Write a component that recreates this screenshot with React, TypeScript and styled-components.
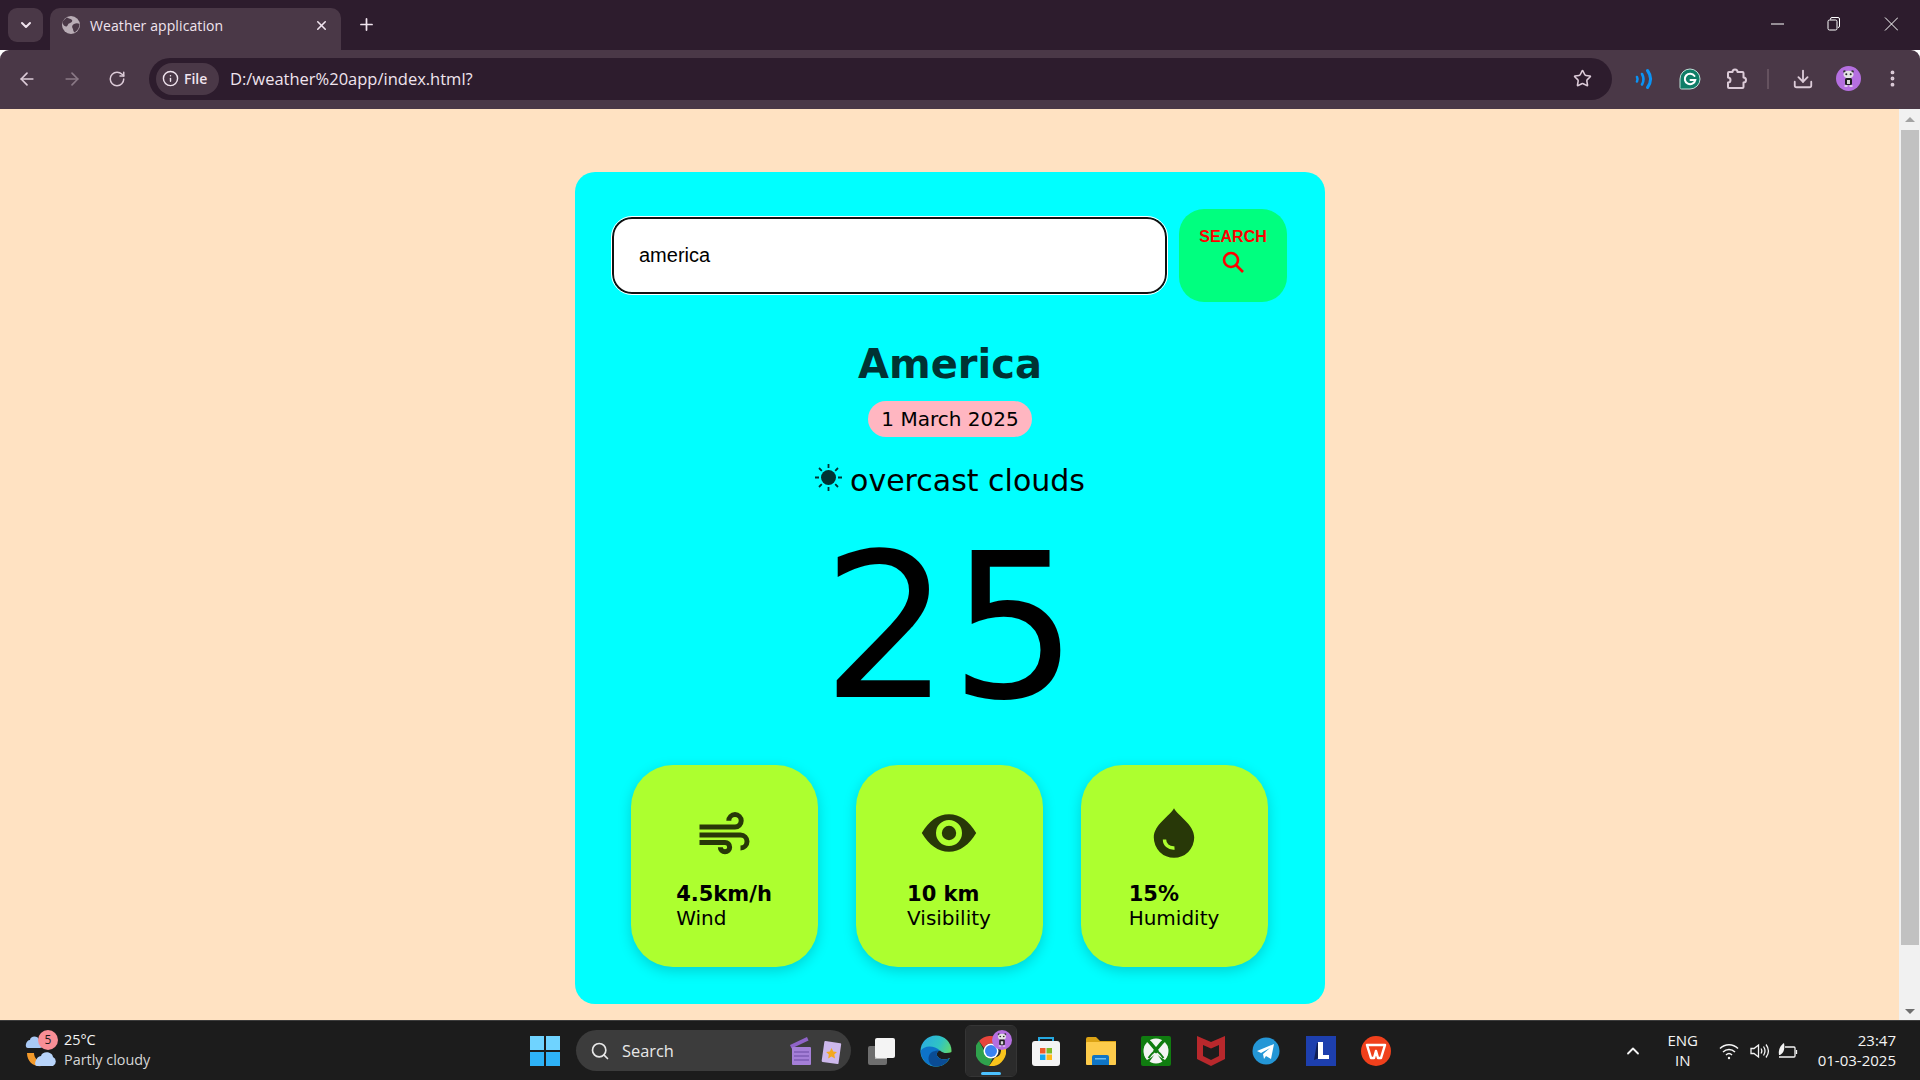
import React from "react";
import styled, { createGlobalStyle } from "styled-components";
import { ArrowLeft, ArrowRight, ChevronDown, ChevronUp, Download, Info, MoreVertical, Plus, RotateCw, Search as SearchGlyph, Star, X } from "lucide-react";

const GlobalStyle = createGlobalStyle`
  html, body { margin: 0; padding: 0; height: 100%; overflow: hidden; }
  * { box-sizing: border-box; }
`;

const uiFont = `"Open Sans", "Noto Sans", sans-serif`;
const pageFont = `"DejaVu Sans", Verdana, sans-serif`;

const Screen = styled.div`
  display: flex;
  flex-direction: column;
  width: 1920px;
  height: 1080px;
  overflow: hidden;
  font-family: ${uiFont};
`;

/* browser chrome */
const TabStrip = styled.div`
  display: flex;
  align-items: flex-end;
  height: 50px;
  padding-left: 8px;
  background: #2d1c2d;
  color: #f0e4ee;
`;

const TabSearch = styled.button`
  display: flex;
  align-items: center;
  justify-content: center;
  width: 35px;
  height: 34px;
  margin: 0 7px 8px 0;
  padding: 0;
  border: 0;
  border-radius: 9px;
  background: #4a3847;
  color: #f0e4ee;
`;

const Tab = styled.div`
  display: flex;
  align-items: center;
  width: 291px;
  height: 42px;
  padding: 0 12px 8px 11px;
  border-radius: 10px 10px 0 0;
  background: #4a3847;
  font-size: 14px;
`;

const TabTitle = styled.span`
  flex: 1;
  margin-left: 9px;
  letter-spacing: 0.1px;
`;

const NewTab = styled.div`
  display: flex;
  width: 32px;
  margin: 0 auto 16px 9px;
  justify-content: center;
`;

const WindowControls = styled.div`
  display: flex;
  align-self: stretch;
  padding-top: 16px;
  padding-right: 21px;
  gap: 41px;
`;

const WindowButton = styled.div`
  display: flex;
  justify-content: center;
  width: 16px;
  height: 16px;
`;

const Toolbar = styled.div`
  display: flex;
  align-items: center;
  height: 59px;
  padding: 0 7px 2px 17px;
  border-radius: 9px 9px 0 0;
  background: #4a3847;
  color: #dccbd8;
`;

const NavButton = styled.div<{ $dim?: boolean }>`
  display: flex;
  justify-content: center;
  width: 20px;
  margin-right: 25px;
  color: ${(p) => (p.$dim ? "#8a7986" : "#dccbd8")};
`;

const Omnibox = styled.div`
  display: flex;
  align-items: center;
  flex: 1;
  height: 42px;
  margin: 0 9px 0 -3px;
  padding: 0 20px 0 7px;
  border-radius: 21px;
  background: #2d1c2d;
`;

const SecurityChip = styled.div`
  display: flex;
  align-items: center;
  gap: 5px;
  width: 63px;
  height: 32px;
  padding-left: 6px;
  border-radius: 16px;
  background: #4a3847;
  color: #f0e4ee;
  font-size: 14px;
  font-weight: 600;
`;

const UrlText = styled.span`
  flex: 1;
  margin-left: 11px;
  color: #f0e4ee;
  font-size: 16.5px;
`;

const ExtensionSlot = styled.div<{ $w?: number }>`
  display: flex;
  align-items: center;
  justify-content: center;
  width: ${(p) => p.$w ?? 46}px;
`;

const ToolbarDivider = styled.div`
  width: 2px;
  height: 20px;
  margin: 0 12px 0 8px;
  background: #65525f;
`;

/* page */
const Viewport = styled.div`
  display: flex;
  flex: 1;
  min-height: 0;
`;

const Page = styled.main`
  flex: 1;
  padding: 63px 0 0 1px;
  background: #ffe2c2;
  font-family: ${pageFont};
`;

const Scrollbar = styled.div`
  display: flex;
  flex-direction: column;
  align-items: center;
  width: 21px;
  padding: 8px 0 6px;
  background: #f1f1f1;
`;

const ScrollThumb = styled.div`
  flex: 1;
  width: 18px;
  margin: 8px 0 64px;
  background: #c1c1c1;
`;

const Arrow = styled.div<{ $down?: boolean }>`
  width: 0;
  height: 0;
  border-left: 5px solid transparent;
  border-right: 5px solid transparent;
  ${(p) => (p.$down ? "border-top: 5px solid #6f6f6f;" : "border-bottom: 5px solid #a3a3a3;")}
`;

const WeatherCard = styled.section`
  display: flex;
  flex-direction: column;
  align-items: center;
  width: 750px;
  height: 832px;
  margin: 0 auto;
  padding: 37px 37px 0;
  border-radius: 20px;
  background: #00ffff;
`;

const SearchRow = styled.form`
  display: flex;
  align-items: center;
  align-self: stretch;
  gap: 12px;
  margin: 0;
`;

const CityInput = styled.input`
  width: 555px;
  height: 77px;
  padding: 0 25px;
  border: 2px solid #111;
  border-radius: 20px;
  outline: 1px solid #fff;
  background: #fff;
  color: #000;
  font-family: "Liberation Sans", Arial, sans-serif;
  font-size: 20px;
`;

const SearchButton = styled.button`
  display: flex;
  flex-direction: column;
  align-items: center;
  gap: 4px;
  width: 108px;
  height: 93px;
  padding: 19px 0 0;
  border: 0;
  border-radius: 25px;
  background: #00ff7f;
  color: #ff0000;
  font-family: "Liberation Sans", Arial, sans-serif;
  font-size: 16px;
  font-weight: 700;
`;

const CityName = styled.h1`
  margin: 37px 0 0;
  color: #003333;
  font-size: 40px;
  font-weight: 700;
  line-height: 50px;
`;

const DatePill = styled.div`
  margin-top: 12px;
  padding: 0 13px;
  height: 36px;
  line-height: 36px;
  border-radius: 18px;
  background: #ffb6c1;
  color: #000;
  font-size: 20px;
`;

const Condition = styled.div`
  display: flex;
  align-items: center;
  margin-top: 23px;
  color: #000;
  font-size: 30px;
  line-height: 42px;
`;

const ConditionIcon = styled.svg`
  width: 27px;
  height: 27px;
  margin: 0 8px 8px 0;
  color: #003333;
`;

const Temperature = styled.div`
  margin-top: 9px;
  color: #000;
  font-size: 201px;
  line-height: 232px;
`;

const StatsRow = styled.div`
  display: flex;
  gap: 38px;
  margin: 22px 2px 0 0;
`;

const StatCard = styled.div`
  display: flex;
  flex-direction: column;
  align-items: center;
  width: 187px;
  height: 202px;
  padding-top: 42px;
  border-radius: 42px;
  background: #adff2f;
  box-shadow: 0 4px 14px rgba(0, 0, 0, 0.18);
  color: #000;
`;

const StatIcon = styled.svg`
  width: 60px;
  height: 52px;
  color: #283808;
`;

const StatText = styled.div`
  margin-top: 23px;
  font-size: 20px;
  line-height: 24px;
`;

const StatValue = styled.div`
  font-size: 21px;
  font-weight: 700;
`;

/* taskbar */
const Taskbar = styled.footer`
  display: flex;
  align-items: center;
  height: 60px;
  border-top: 1px solid #3c3c3c;
  background: #1c1c1c;
  color: #f4f4f4;
  font-size: 14px;
`;

const WeatherWidget = styled.div`
  display: flex;
  align-items: center;
  width: 530px;
  padding-left: 24px;
`;

const WeatherIconWrap = styled.div`
  position: relative;
  width: 36px;
  height: 40px;
  margin-right: 4px;
`;

const Badge = styled.span`
  position: absolute;
  top: -1px;
  left: 14px;
  width: 20px;
  height: 20px;
  border-radius: 50%;
  background: #f88e96;
  color: #1c1c1c;
  font-size: 12px;
  line-height: 20px;
  text-align: center;
`;

const WeatherLines = styled.div`
  margin-bottom: 2px;
  font-size: 14.4px;
  line-height: 20px;
`;

const Muted = styled.div`
  color: #d6d6d6;
`;

const StartButton = styled.div`
  display: grid;
  grid-template-columns: 14px 14px;
  grid-template-rows: 14px 14px;
  gap: 2px;
  width: 31px;
`;

const StartPane = styled.i<{ $light?: boolean }>`
  display: block;
  background: ${(p) => (p.$light ? "#6fd3ff" : "#2eb2f7")};
`;

const TaskSearch = styled.div`
  display: flex;
  align-items: center;
  width: 275px;
  height: 41px;
  margin: 0 16px 0 15px;
  padding: 0 6px 0 14px;
  border-radius: 21px;
  background: #3c3c3c;
  color: #e8e8e8;
  font-size: 16.4px;
`;

const TaskSearchLabel = styled.span`
  flex: 1;
  margin-left: 12px;
`;

const TaskSlot = styled.div<{ $active?: boolean }>`
  position: relative;
  display: flex;
  align-items: center;
  justify-content: center;
  width: 50px;
  height: 50px;
  margin-right: 5px;
  border-radius: 5px;
  ${(p) => p.$active && "background: #2b2b2b; outline: 1px solid #353535;"}
`;

const TaskViewSlot = styled(TaskSlot)`
  width: 32px;
  margin-right: 12px;
`;

const ActiveBar = styled.span`
  position: absolute;
  left: 15px;
  bottom: 1px;
  width: 20px;
  height: 3px;
  border-radius: 2px;
  background: #4cc2ff;
`;

const ChromeBadge = styled.span`
  position: absolute;
  top: 4px;
  right: 4px;
  display: block;
  width: 20px;
  height: 20px;
`;

const Tray = styled.div`
  display: flex;
  align-items: center;
  margin-left: auto;
  padding-right: 24px;
`;

const TrayLang = styled.div`
  width: 40px;
  margin: 0 16px 2px 20px;
  font-size: 15px;
  line-height: 20px;
  text-align: center;
`;

const TrayIcons = styled.div`
  display: flex;
  align-items: center;
  gap: 11px;

  svg:last-child {
    margin-left: -4px;
  }
`;

const Clock = styled.div`
  margin: 0 0 2px 20px;
  font-size: 15px;
  line-height: 20px;
  text-align: right;
`;

/* drawings */
const FaviconGlobe = () => (
  <svg width="20" height="20" viewBox="0 0 20 20">
    <circle cx="10" cy="10" r="9" fill="#b9adb6" />
    <path d="M6 2.500c2 1.500 4 1 5 2.500s-1.500 3-3 3.500-1 3-3 3S2 9 1.500 8 4 3.500 6 2.500zM13 9c2-1 4-1 5.500 0 0 3-1.500 6.500-5 8.500-1.500-1-1-3-2-4.500S11.500 10 13 9z" fill="#4a3847" />
  </svg>
);

const SoundWaves = () => (
  <svg width="24" height="24" viewBox="0 0 24 24" fill="none" stroke="#0a93f5" strokeLinecap="round">
    <path d="M5 10c.8 1.500.8 3 0 4.500" strokeWidth="2.600" />
    <path d="M10 7c2 3.500 2 7 0 10.500" strokeWidth="2.600" />
    <path d="M15.500 3.500c4 5.500 4 11.500 0 17" strokeWidth="3" />
  </svg>
);

const GrammarlyIcon = () => (
  <svg width="22" height="22" viewBox="0 0 22 22">
    <path d="M11 1a10 10 0 1 1 0 20H2.500c-1 0-1.500-.6-1.500-1.500V11A10 10 0 0 1 11 1z" fill="#0f7d67" stroke="#bfe0d8" strokeWidth="1" />
    <path d="M15.500 8a5.300 5.300 0 1 0 .8 4H11.500" fill="none" stroke="#fff" strokeWidth="2" strokeLinecap="round" />
  </svg>
);

const PuzzleIcon = () => (
  <svg width="22" height="22" viewBox="0 0 22 22" fill="none" stroke="#dccbd8" strokeWidth="2" strokeLinejoin="round">
    <path d="M7.500 4a2.500 2.500 0 0 1 5 0h5a1 1 0 0 1 1 1v4.500a2.500 2.500 0 0 1 0 5V19a1 1 0 0 1-1 1H4a1 1 0 0 1-1-1v-4.500a2.500 2.500 0 0 0 0-5V5a1 1 0 0 1 1-1z" />
  </svg>
);

const PandaAvatar = ({ size = 25 }: { size?: number }) => (
  <svg width={size} height={size} viewBox="0 0 25 25">
    <circle cx="12.500" cy="12.500" r="12.500" fill="#b56fe0" />
    <circle cx="8.500" cy="5.500" r="1.300" fill="#333" />
    <circle cx="16.500" cy="5.500" r="1.300" fill="#333" />
    <ellipse cx="12.500" cy="8.500" rx="5" ry="3.800" fill="#e2e2e2" />
    <circle cx="10.300" cy="8.200" r="1" fill="#222" />
    <circle cx="14.700" cy="8.200" r="1" fill="#222" />
    <rect x="9" y="12" width="7" height="7" rx="1.500" fill="#1d1d1d" />
    <rect x="11" y="14" width="3" height="4" fill="#d8d8d8" />
    <path d="M8.500 20h3M13.500 20h3" stroke="#eee" strokeWidth="1.500" />
  </svg>
);

const SunIcon = () => (
  <ConditionIcon viewBox="0 0 27 27">
    <circle cx="13.500" cy="13.500" r="7.500" fill="currentColor" />
    <path
      d="M13.500 0v4M13.500 23v4M0 13.500h4M23 13.500h4M4 4l2.800 2.800M20.200 20.200L23 23M23 4l-2.800 2.800M6.800 20.200L4 23"
      stroke="currentColor"
      strokeWidth="1.800"
    />
  </ConditionIcon>
);

const WindIcon = () => (
  <StatIcon viewBox="0 0 60 52" fill="none" stroke="currentColor" strokeWidth="5">
    <path d="M5.500 20H41a6.200 6.200 0 1 0-6.200-6.200" />
    <path d="M5.500 28h41a6.500 6.500 0 0 1 0 13" />
    <path d="M5.500 35.500H31a4.650 4.650 0 1 1-4.650 4.650" />
  </StatIcon>
);

const EyeIcon = () => (
  <StatIcon viewBox="0 0 60 52">
    <path
      fillRule="evenodd"
      fill="currentColor"
      d="M2.800 26C10 14 19 7.300 30 7.300S50 14 57.200 26C50 38 41 44.700 30 44.700S10 38 2.800 26zM30 13a13 13 0 1 0 0 26 13 13 0 0 0 0-26z"
    />
    <circle cx="30" cy="26" r="7.200" fill="currentColor" />
  </StatIcon>
);

const DropIcon = () => (
  <StatIcon viewBox="0 0 60 52">
    <path fill="currentColor" d="M30 1.300C34 9 50.200 17.500 50.200 30.600a20.200 20.200 0 0 1-40.400 0C9.800 17.500 26 9 30 1.300z" />
    <path d="M20.500 32.500c0 5 4 9 10 8.500" fill="none" stroke="#adff2f" strokeWidth="3.400" />
  </StatIcon>
);

const PartlyCloudy = () => (
  <svg width="36" height="40" viewBox="0 0 36 40" style={{ display: "block" }}>
    <path d="M4 17h12a4 4 0 0 0-1-8c-1-5-9-4-9 0-4 0-6 8-2 8z" fill="#a9c9f5" />
    <path d="M3 22c0 9 7 14 15 13 4-1 3-3 1-4-5 0-9-4-9-9z" fill="#f39a2b" />
    <path d="M13 35h16a5 5 0 0 0 0-9c-1-6-11-6-12-1-5 0-8 10-4 10z" fill="#b8d4fa" />
  </svg>
);

const TaskViewIcon = () => (
  <svg width="32" height="28" viewBox="0 0 32 28">
    <rect x="1" y="9" width="19" height="19" rx="2" fill="#6e6e6e" />
    <rect x="8" y="9" width="12" height="13" fill="#b5b5b5" />
    <rect x="8" y="1" width="20" height="20" rx="2" fill="#f4f4f4" />
  </svg>
);

const EdgeIcon = () => (
  <svg width="32" height="32" viewBox="0 0 32 32">
    <defs>
      <linearGradient id="edgeTop" x1="0" y1="0" x2="1" y2="0.500">
        <stop offset="0" stopColor="#2aa7e6" />
        <stop offset="0.600" stopColor="#2fc4c4" />
        <stop offset="1" stopColor="#63d96b" />
      </linearGradient>
    </defs>
    <circle cx="16" cy="16" r="15.500" fill="url(#edgeTop)" />
    <path d="M32 17C27 19 22 18 20 15.500 17 16 16 19 17.500 21.500 20 25 25 25.500 29.500 23L32 23z" fill="#1c1c1c" />
    <path d="M.6 16C1 25 8 31.500 16 31.500c6 0 11-3 13.500-8.500-4.500 2.500-9.500 2-12-1.500C16 19 17 16 20 15.500 14 10 4 10 .6 16z" fill="#0d73c9" />
    <path d="M11 29.500c-4-4-3-11 2-13 2-.8 5-1.300 7-1-3 .5-4 3.500-2.500 6 2.500 3.500 7.500 4 12 1.500C27 28 22 31.500 16 31.500c-2 0-3.500-.7-5-2z" fill="#0a4c94" />
  </svg>
);

const ChromeIcon = () => (
  <svg width="30" height="30" viewBox="0 0 30 30">
    <path d="M15 0a15 15 0 0 1 13 7.500H15a7.500 7.500 0 0 0-7 4.500L3 5a15 15 0 0 1 12-5z" fill="#e8453c" />
    <path d="M3 5l5.500 10a7.500 7.500 0 0 0 8 7.500L13 30A15 15 0 0 1 3 5z" fill="#2fa24c" />
    <path d="M28 7.500A15 15 0 0 1 13 30l6-8.500A7.500 7.500 0 0 0 21 7.500z" fill="#f9c41c" />
    <circle cx="15" cy="15" r="7.500" fill="#fff" />
    <circle cx="15" cy="15" r="6" fill="#3b82f0" />
  </svg>
);

const StoreIcon = () => (
  <svg width="30" height="30" viewBox="0 0 30 30">
    <path d="M8 6V2h14v4" fill="none" stroke="#25a8e0" strokeWidth="2" />
    <rect x="1" y="5" width="28" height="25" rx="3" fill="#f4f4f4" />
    <rect x="9" y="12" width="5.500" height="5.500" fill="#ef5a2b" />
    <rect x="15.500" y="12" width="5.500" height="5.500" fill="#7dbb28" />
    <rect x="9" y="18.500" width="5.500" height="5.500" fill="#14a6ee" />
    <rect x="15.500" y="18.500" width="5.500" height="5.500" fill="#fdb91a" />
  </svg>
);

const FolderIcon = () => (
  <svg width="30" height="28" viewBox="0 0 30 28">
    <path d="M0 2a2 2 0 0 1 2-2h8l4 4h16v6H0z" fill="#dca315" />
    <rect y="5" width="30" height="23" rx="1" fill="#fdcb4b" />
    <path d="M6 20a2 2 0 0 1 2-2h13a2 2 0 0 1 2 2v8H6z" fill="#0f74c4" />
    <rect x="9" y="21" width="11" height="1.500" fill="#6fbdf0" />
  </svg>
);

const XboxIcon = () => (
  <svg width="30" height="30" viewBox="0 0 30 30">
    <rect width="30" height="30" rx="2" fill="#107c10" />
    <circle cx="15" cy="15" r="12.500" fill="#f4f4f4" />
    <path d="M6 3.500C11 8 19 19 24.500 27M24 3.500C19 8 11 19 5.500 27" fill="none" stroke="#107c10" strokeWidth="3.400" />
    <path d="M4 9c3 1 7 4 11 9-4 3-7 5-9 6-3-4-4-10-2-15zM26 9c-3 1-7 4-11 9 4 3 7 5 9 6 3-4 4-10 2-15z" fill="#f4f4f4" />
    <path d="M9 4.500c2-.8 3.500-1 6-1s4 .2 6 1c-2 .5-4 1.500-6 3-2-1.500-4-2.500-6-3z" fill="#f4f4f4" />
    <path d="M15 14c-2.500 2-5.500 5-7.500 8M15 14c2.500 2 5.500 5 7.500 8" fill="none" stroke="#107c10" strokeWidth="2" />
  </svg>
);

const McAfeeIcon = () => (
  <svg width="28" height="30" viewBox="0 0 28 30">
    <path d="M0 0l14 6 14-6v23l-14 7-14-7z" fill="#b8282c" />
    <path d="M6 9l8 3.500L22 9v11l-8 4-8-4z" fill="#1c1c1c" />
  </svg>
);

const TelegramIcon = () => (
  <svg width="28" height="28" viewBox="0 0 28 28">
    <circle cx="14" cy="14" r="13.500" fill="#2496d6" />
    <path d="M5 14l17-7-3 15-5-3-2 3-1-5 7-6-9 5z" fill="#fff" />
  </svg>
);

const LaunchIcon = () => (
  <svg width="30" height="30" viewBox="0 0 30 30">
    <rect width="30" height="30" fill="#1d3fae" />
    <path d="M8 24l3-17h5l-1 14z" fill="#0f1e55" />
    <path d="M12 6h5v13h6v4H12z" fill="#fff" />
  </svg>
);

const WpsIcon = () => (
  <svg width="30" height="30" viewBox="0 0 30 30">
    <circle cx="15" cy="15" r="15" fill="#f0401c" />
    <path d="M6 9h18l-4 13h-3l-2-7-2 7h-3z" fill="none" stroke="#fff" strokeWidth="2.500" strokeLinejoin="round" />
  </svg>
);

const WifiIcon = () => (
  <svg width="20" height="18" viewBox="0 0 20 18" fill="none" stroke="#f4f4f4" strokeWidth="1.500">
    <path d="M1 6.500c5-5 13-5 18 0M4 10c3.500-3.500 8.500-3.500 12 0M7 13c1.800-1.700 4.200-1.700 6 0" />
    <circle cx="10" cy="16" r="1.200" fill="#f4f4f4" stroke="none" />
  </svg>
);

const VolumeIcon = () => (
  <svg width="20" height="18" viewBox="0 0 20 18" fill="none" stroke="#f4f4f4" strokeWidth="1.300">
    <path d="M1 6.500h3L8.500 3v12L4 11.500H1z" />
    <path d="M11 6.500c1 1.500 1 3.500 0 5M13.500 4.500c2 3 2 6 0 9M16 2.500c3 4 3 9 0 13" />
  </svg>
);

const BatteryIcon = () => (
  <svg width="21" height="18" viewBox="0 0 21 18" fill="none" stroke="#f4f4f4" strokeWidth="1.300">
    <path d="M8 5h9a1 1 0 0 1 1 1v8a1 1 0 0 1-1 1H2" />
    <path d="M19.500 8v4" />
    <path d="M2 13C1 7 4 3 7 1c1 5 0 10-4 12z" fill="#f4f4f4" stroke="none" />
  </svg>
);

const SearchHighlights = () => (
  <svg width="58" height="30" viewBox="0 0 58 30">
    <path d="M3 9l17-8 1.500 3.500-17 8z" fill="#8f63c8" />
    <rect x="5" y="11" width="19" height="18" rx="1" fill="#a57fd8" />
    <path d="M7 16h15M7 20h15M7 24h15" stroke="#6a4aa3" strokeWidth="1" />
    <rect x="36" y="6" width="17" height="21" rx="1" fill="#cdb8ec" transform="rotate(8 44 16)" />
    <path d="M44.500 12l1.800 3.500 3.700.5-2.700 2.600.7 3.800-3.500-1.800-3.300 1.800.6-3.800-2.700-2.600 3.700-.5z" fill="#f3a81f" />
  </svg>
);

const stats = [
  { icon: <WindIcon />, value: "4.5km/h", label: "Wind" },
  { icon: <EyeIcon />, value: "10 km", label: "Visibility" },
  { icon: <DropIcon />, value: "15%", label: "Humidity" },
];

const ChromeWithBadge = () => (
  <>
    <ChromeIcon />
    <ChromeBadge>
      <PandaAvatar size={20} />
    </ChromeBadge>
    <ActiveBar />
  </>
);

const taskApps = [
  <EdgeIcon key="edge" />,
  <ChromeWithBadge key="chrome" />,
  <StoreIcon key="store" />,
  <FolderIcon key="folder" />,
  <XboxIcon key="xbox" />,
  <McAfeeIcon key="mcafee" />,
  <TelegramIcon key="telegram" />,
  <LaunchIcon key="l" />,
  <WpsIcon key="wps" />,
];

export default function App() {
  return (
    <Screen>
      <GlobalStyle />
      <TabStrip>
        <TabSearch>
          <ChevronDown size={16} strokeWidth={3} />
        </TabSearch>
        <Tab>
          <FaviconGlobe />
          <TabTitle>Weather application</TabTitle>
          <X size={15} strokeWidth={2.5} />
        </Tab>
        <NewTab>
          <Plus size={19} strokeWidth={2.2} />
        </NewTab>
        <WindowControls>
          <WindowButton>
            <svg width="14" height="16" viewBox="0 0 14 16" stroke="#fff" fill="none">
              <path d="M1 8h13" />
            </svg>
          </WindowButton>
          <WindowButton>
            <svg width="14" height="16" viewBox="0 0 14 16" stroke="#fff" fill="none">
              <rect x="1" y="4" width="9" height="10" rx="1.500" />
              <path d="M3.500 3.500V3a1.500 1.500 0 0 1 1.500-1.500h6A1.500 1.500 0 0 1 12.500 3v7a1.500 1.500 0 0 1-1.500 1.500" />
            </svg>
          </WindowButton>
          <WindowButton>
            <svg width="14" height="16" viewBox="0 0 14 16" stroke="#fff" fill="none">
              <path d="M1 1.500l13 13M14 1.500l-13 13" />
            </svg>
          </WindowButton>
        </WindowControls>
      </TabStrip>
      <Toolbar>
        <NavButton>
          <ArrowLeft size={20} />
        </NavButton>
        <NavButton $dim>
          <ArrowRight size={20} />
        </NavButton>
        <NavButton>
          <RotateCw size={18} />
        </NavButton>
        <Omnibox>
          <SecurityChip>
            <Info size={17} />
            File
          </SecurityChip>
          <UrlText>D:/weather%20app/index.html?</UrlText>
          <Star size={19} strokeWidth={2} />
        </Omnibox>
        <ExtensionSlot>
          <SoundWaves />
        </ExtensionSlot>
        <ExtensionSlot>
          <GrammarlyIcon />
        </ExtensionSlot>
        <ExtensionSlot>
          <PuzzleIcon />
        </ExtensionSlot>
        <ToolbarDivider />
        <ExtensionSlot $w={44}>
          <Download size={22} />
        </ExtensionSlot>
        <ExtensionSlot>
          <PandaAvatar />
        </ExtensionSlot>
        <ExtensionSlot $w={42}>
          <MoreVertical size={21} strokeWidth={2.4} />
        </ExtensionSlot>
      </Toolbar>
      <Viewport>
        <Page>
          <WeatherCard>
            <SearchRow onSubmit={(e) => e.preventDefault()}>
              <CityInput defaultValue="america" />
              <SearchButton type="submit">
                SEARCH
                <svg width="24" height="24" viewBox="0 0 24 24" fill="none" stroke="#ff0000" strokeWidth="2.600">
                  <circle cx="10" cy="10" r="7" />
                  <path d="M15 15l7 7" />
                </svg>
              </SearchButton>
            </SearchRow>
            <CityName>America</CityName>
            <DatePill>1 March 2025</DatePill>
            <Condition>
              <SunIcon />
              overcast clouds
            </Condition>
            <Temperature>25</Temperature>
            <StatsRow>
              {stats.map((s) => (
                <StatCard key={s.label}>
                  {s.icon}
                  <StatText>
                    <StatValue>{s.value}</StatValue>
                    {s.label}
                  </StatText>
                </StatCard>
              ))}
            </StatsRow>
          </WeatherCard>
        </Page>
        <Scrollbar>
          <Arrow />
          <ScrollThumb />
          <Arrow $down />
        </Scrollbar>
      </Viewport>
      <Taskbar>
        <WeatherWidget>
          <WeatherIconWrap>
            <PartlyCloudy />
            <Badge>5</Badge>
          </WeatherIconWrap>
          <WeatherLines>
            25°C
            <Muted>Partly cloudy</Muted>
          </WeatherLines>
        </WeatherWidget>
        <StartButton>
          <StartPane $light />
          <StartPane $light />
          <StartPane />
          <StartPane />
        </StartButton>
        <TaskSearch>
          <SearchGlyph size={20} />
          <TaskSearchLabel>Search</TaskSearchLabel>
          <SearchHighlights />
        </TaskSearch>
        <TaskViewSlot>
          <TaskViewIcon />
        </TaskViewSlot>
        {taskApps.map((app, i) => (
          <TaskSlot key={i} $active={i === 1}>
            {app}
          </TaskSlot>
        ))}
        <Tray>
          <ChevronUp size={20} strokeWidth={2.2} />
          <TrayLang>
            ENG
            <br />
            IN
          </TrayLang>
          <TrayIcons>
            <WifiIcon />
            <VolumeIcon />
            <BatteryIcon />
          </TrayIcons>
          <Clock>
            23:47
            <br />
            01-03-2025
          </Clock>
        </Tray>
      </Taskbar>
    </Screen>
  );
}
